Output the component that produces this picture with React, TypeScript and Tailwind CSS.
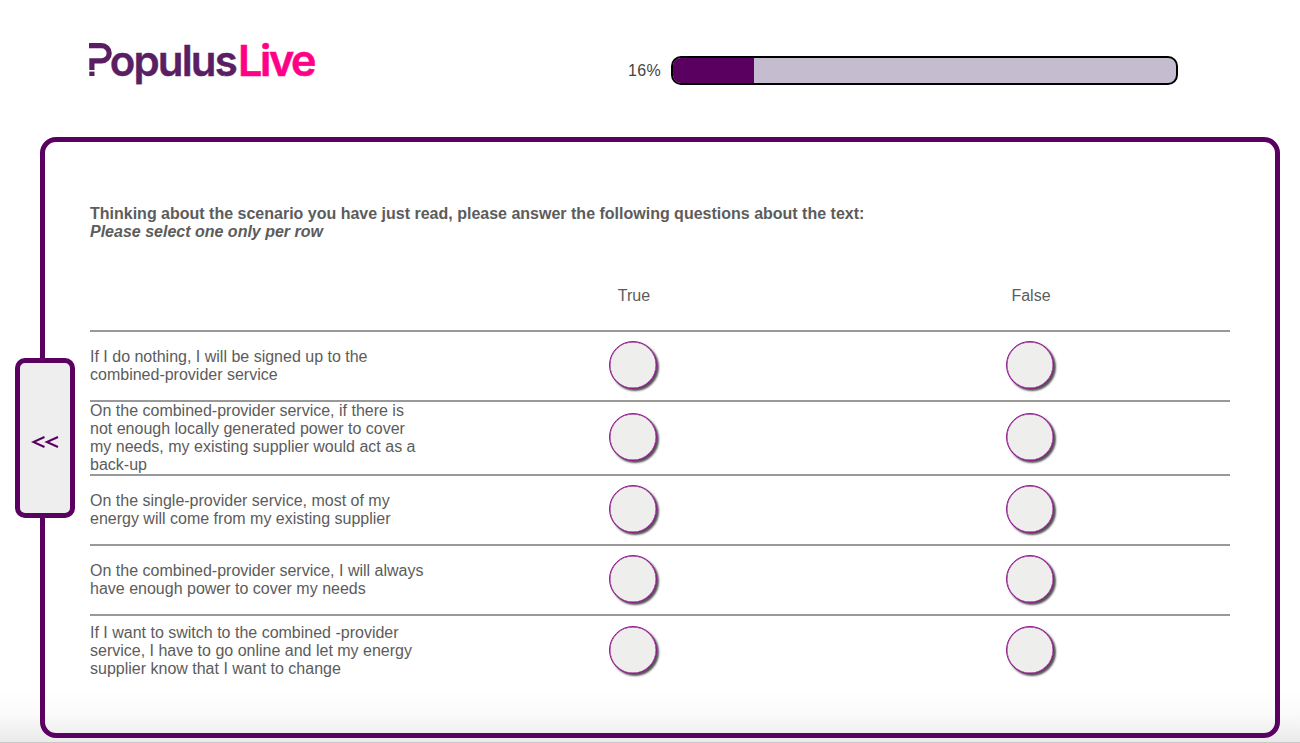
const rows: { lines: string[]; height: string }[] = [
  { lines: ['If I do nothing, I will be signed up to the', 'combined-provider service'], height: 'h-[70px]' },
  {
    lines: [
      'On the combined-provider service, if there is',
      'not enough locally generated power to cover',
      'my needs, my existing supplier would act as a',
      'back-up',
    ],
    height: 'h-[74px]',
  },
  { lines: ['On the single-provider service, most of my', 'energy will come from my existing supplier'], height: 'h-[70px]' },
  { lines: ['On the combined-provider service, I will always', 'have enough power to cover my needs'], height: 'h-[70px]' },
  {
    lines: ['If I want to switch to the combined -provider', 'service, I have to go online and let my energy', 'supplier know that I want to change'],
    height: 'h-[72px]',
  },
];

function Logo() {
  return (
    <svg width="230" height="70" viewBox="0 -10 230 70" role="img" aria-label="PopulusLive" className="block">
      <path d="M0 5.6H12.6A7.2 7.2 0 0 1 12.6 20.8H2.9V30" fill="none" stroke="#5a1f62" strokeWidth="5.2" />
      <rect x="0.3" y="31.6" width="5.2" height="4.4" fill="#5a1f62" />
      <text x="20.8" y="36" fontFamily="Inter, sans-serif" fontWeight="600" fontSize="42" fill="#5a1f62" stroke="#5a1f62" strokeWidth="0.4" textLength="128" lengthAdjust="spacing">
        opulus
      </text>
      <text x="148.9" y="36" fontFamily="Inter, sans-serif" fontWeight="600" fontSize="43" fill="#ff0087" stroke="#ff0087" strokeWidth="0.6" textLength="78.6" lengthAdjust="spacing">
        Live
      </text>
    </svg>
  );
}

function Choice({ label }: { label: string }) {
  return (
    <div className="flex w-[397px] justify-center">
      <button
        aria-label={label}
        className="mr-[3px] mb-[3px] size-[48px] rounded-full border border-[#8f148c] bg-[#eeeeec] shadow-[inset_0_0_0_0.4px_#8f148c,2px_2px_2px_#555]"
      />
    </div>
  );
}

export default function App() {
  return (
    <div className="flex h-[743px] w-[1300px] flex-col overflow-hidden border-b border-[#c8c8c8] bg-[linear-gradient(to_bottom,#fff_690px,#fafafa_715px,#eaeaea_742px)] font-['Liberation_Sans',Arial,sans-serif] text-[16px] leading-[18px] text-[#5c5c5c]">
      <header className="flex h-[137px] shrink-0 items-start pt-[30px] pl-[89px]">
        <Logo />
        <div className="ml-[309px] flex items-center pt-[26px]">
          <span className="w-[43px] tracking-[0.3px] text-[#444]">16%</span>
          <div className="h-[29px] w-[507px] overflow-hidden rounded-[10px] border-2 border-black bg-[#c6bccf]">
            <div className="h-full w-[81px] bg-[#590060]" />
          </div>
        </div>
      </header>
      <main className="relative ml-[40px] h-[601px] w-[1240px] shrink-0 rounded-[16px] border-[5px] border-[#590060] pt-[63px] pl-[45px]">
        <button className="absolute top-[216px] -left-[30px] flex h-[160px] w-[60px] items-center justify-center rounded-[10px] border-[5px] border-[#590060] bg-[#eee] text-[#590060]">
          <svg width="28" height="12" viewBox="0 0 28 12" fill="none" stroke="currentColor" strokeWidth="2" className="mt-[8px]">
            <path d="M13.5 1L2.3 6L13.5 11M27 1L15.8 6L27 11" />
          </svg>
        </button>
        <h1 className="font-bold whitespace-nowrap">
          Thinking about the scenario you have just read, please answer the following questions about the text:
        </h1>
        <p className="font-bold italic">Please select one only per row</p>
        <section className="mt-[28px] w-[1140px]">
          <div className="flex h-[61px] pt-[18px] text-center">
            <div className="w-[345.5px]" />
            <div className="w-[397px]">True</div>
            <div className="w-[397px]">False</div>
          </div>
          {rows.map((row) => (
            <div key={row.lines[0]} className={`flex items-center border-t-2 border-[#999] ${row.height}`}>
              <div className="w-[346px] whitespace-nowrap">
                {row.lines.map((line) => (
                  <div key={line}>{line}</div>
                ))}
              </div>
              <Choice label="True" />
              <Choice label="False" />
            </div>
          ))}
        </section>
      </main>
    </div>
  );
}
